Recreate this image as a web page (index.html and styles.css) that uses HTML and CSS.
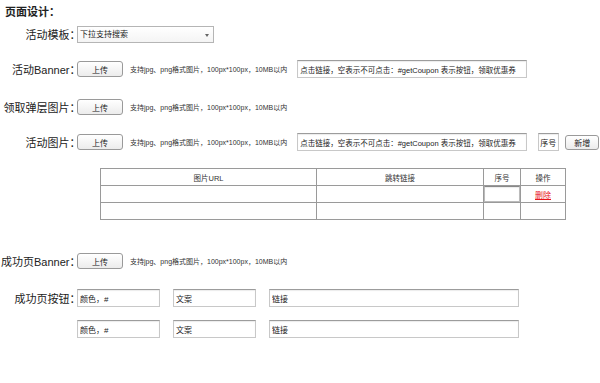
FILE: index.html
```html
<!doctype html>
<html lang="zh-CN">
<head>
	<meta charset="utf-8">
	<title>页面设计</title>
	<link rel="stylesheet" href="styles.css">
</head>
<body>

<div class="page">
	<div class="title">页面设计：</div>

	<div class="row r1">
		<label class="lbl">活动模板：</label>
		<div class="select"><span>下拉支持搜索</span><i class="arrow"></i></div>
	</div>

	<div class="row r2">
		<label class="lbl">活动Banner：</label>
		<button class="btn">上传</button>
		<span class="hint">支持jpg、png格式图片，100px*100px，10MB以内</span>
		<input class="ipt link" type="text" value="点击链接，空表示不可点击：#getCoupon 表示按钮，领取优惠券">
	</div>

	<div class="row r3">
		<label class="lbl">领取弹层图片：</label>
		<button class="btn">上传</button>
		<span class="hint">支持jpg、png格式图片，100px*100px，10MB以内</span>
	</div>

	<div class="row r4">
		<label class="lbl">活动图片：</label>
		<button class="btn">上传</button>
		<span class="hint">支持jpg、png格式图片，100px*100px，10MB以内</span>
		<input class="ipt link" type="text" value="点击链接，空表示不可点击：#getCoupon 表示按钮，领取优惠券">
		<input class="ipt num" type="text" value="序号">
		<button class="btn add">新增</button>
	</div>

	<!-- uploaded pictures -->
	<table class="pics">
		<colgroup>
			<col class="c-url">
			<col class="c-link">
			<col class="c-no">
			<col class="c-op">
		</colgroup>
		<tr><th>图片URL</th><th>跳转链接</th><th>序号</th><th>操作</th></tr>
		<tr><td></td><td></td><td><input class="ipt cell" type="text"></td><td><a href="#" class="del">删除</a></td></tr>
		<tr><td></td><td></td><td></td><td></td></tr>
	</table>

	<div class="row r5">
		<label class="lbl">成功页Banner：</label>
		<button class="btn">上传</button>
		<span class="hint">支持jpg、png格式图片，100px*100px，10MB以内</span>
	</div>

	<div class="row r6">
		<label class="lbl">成功页按钮：</label>
		<input class="ipt color" type="text" value="颜色，#">
		<input class="ipt copy" type="text" value="文案">
		<input class="ipt url" type="text" value="链接">
	</div>

	<div class="row r7">
		<label class="lbl"></label>
		<input class="ipt color" type="text" value="颜色，#">
		<input class="ipt copy" type="text" value="文案">
		<input class="ipt url" type="text" value="链接">
	</div>
</div>

</body>
</html>
```

FILE: styles.css
```css
html,body{
	background: #fff;
	margin: 0;
	padding: 0;
	font-family: "Liberation Sans", "Noto Sans CJK SC", sans-serif;
	color: #222;
}
*{
	box-sizing: border-box;
}
	.page{
		width: 600px;
		padding-top: 5px;
	}
	.title{
		padding-left: 5px;
		font-size: 11px;
		line-height: 14px;
		font-weight: bold;
		font-feature-settings: "halt";
	}
	.row{
		display: flex;
		align-items: center;
		height: 18px;
	}
	.r1{ margin-top: 6px; }
	.r2{ margin-top: 17px; }
	.r3{ margin-top: 20px; }
	.r4{ margin-top: 17px; }
	.r5{ margin-top: 32px; }
	.r6{ margin-top: 19px; }
	.r7{ margin-top: 13px; }

	/* labels: half width colon so the text ends right at the field */
	.lbl{
		width: 77px;
		flex: none;
		padding-right: 2px;
		text-align: right;
		font-size: 11px;
		white-space: nowrap;
		font-feature-settings: "halt";
	}

	/* fake select, flat like the mac one */
	.select{
		position: relative;
		width: 137px;
		height: 17px;
		border: 1px solid #b5b5b5;
		background: linear-gradient(#fff, #f4f4f4);
		font-size: 8px;
		line-height: 15px;
		padding-left: 2px;
	}
	.select .arrow{
		position: absolute;
		right: 4px;
		top: 7px;
		border-left: 2px solid transparent;
		border-right: 2px solid transparent;
		border-top: 3px solid #666;
	}

	.btn{
		flex: none;
		width: 46px;
		height: 16px;
		padding: 0;
		border: 1px solid #9a9a9a;
		border-radius: 3px;
		background: linear-gradient(#fff, #ececec);
		font-family: inherit;
		font-size: 8px;
		color: #222;
	}
	.hint{
		margin-left: 7px;
		font-size: 7px;
		white-space: nowrap;
		color: #333;
	}

	.ipt{
		flex: none;
		height: 18px;
		padding: 0 2px;
		border: 1px solid #c8c8c8;
		border-top-color: #9c9c9c;
		box-shadow: inset 0 1px 1px rgba(0,0,0,.08);
		font-family: inherit;
		font-size: 8px;
		color: #222;
		outline: none;
	}
	.link{
		width: 230px;
		margin-left: 10px;
		font-size: 7.5px;
	}
	.num{
		width: 21px;
		margin-left: 11px;
		padding: 0 1px;
	}
	.add{
		width: 34px;
		height: 15px;
		margin-left: 6px;
	}
	.color{ width: 83px; }
	.copy{ width: 83px; margin-left: 13px; }
	.url{ width: 250px; margin-left: 13px; }

	table.pics{
		margin: 17px 0 0 100px;
		width: 465px;
		border-collapse: collapse;
		table-layout: fixed;
	}
	.c-url{ width: 216px; }
	.c-link{ width: 167px; }
	.c-no{ width: 37px; }
	.c-op{ width: 45px; }
	.pics th,
	.pics td{
		height: 17px;
		padding: 0;
		border: 1px solid #9a9a9a;
		font-size: 7.5px;
		font-weight: normal;
		text-align: center;
		color: #333;
	}
	.ipt.cell{
		display: block;
		width: 100%;
		height: 16px;
		border-color: #bbb;
		border-top-color: #888;
	}
	a.del{
		color: #e8161b;
		text-decoration: underline;
		font-size: 8px;
	}
```
